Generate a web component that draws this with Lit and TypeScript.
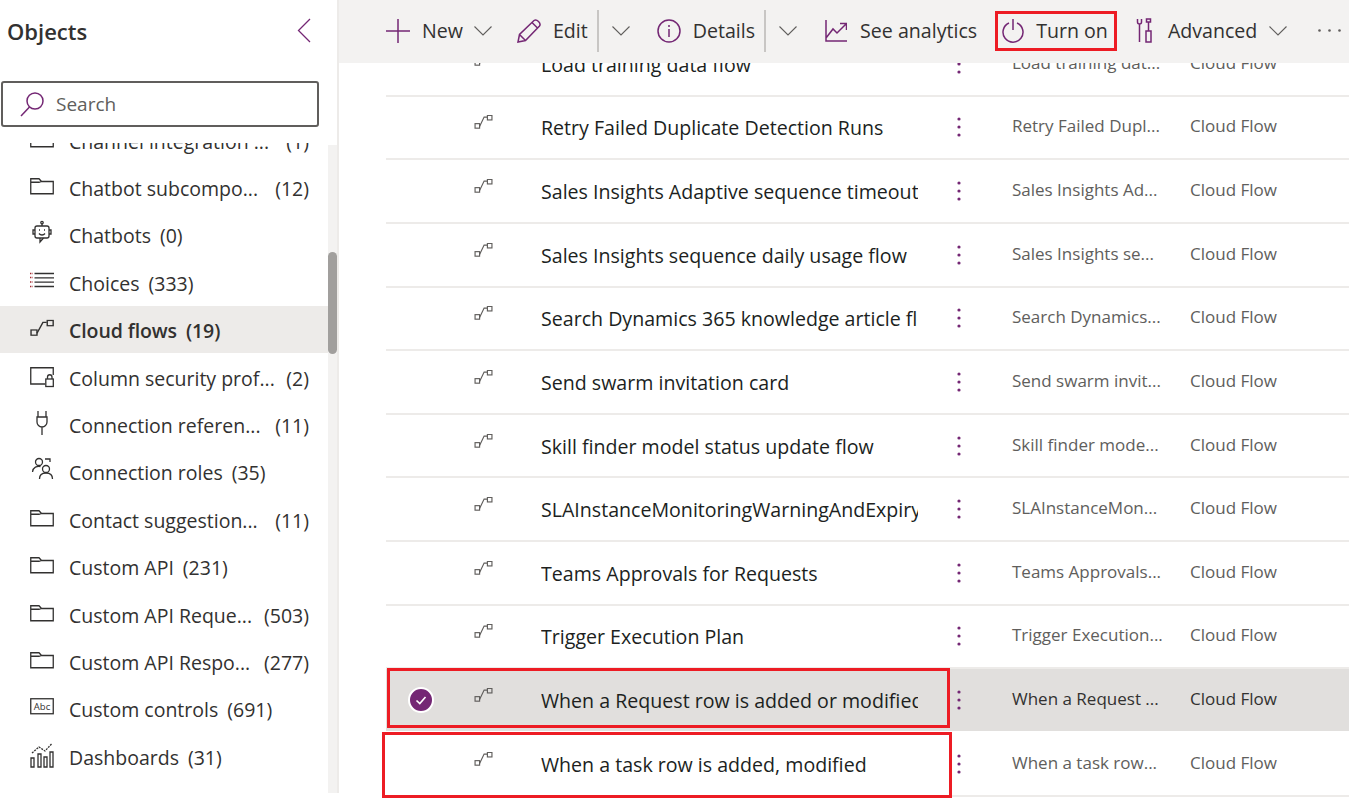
import { LitElement, html, css, svg } from "lit";
import { customElement } from "lit/decorators.js";

const flow = svg`<rect x="0.5" y="10.5" width="5.5" height="5.5"/><rect x="15.5" y="0.5" width="5.5" height="5.5"/><path d="M6 14 L11.5 2.5 L15 2.5"/>`;
const folder = svg`<path transform="translate(0 5)" d="M0.75 0.75 H9 L11.5 3.5 H23.25 V15.75 H0.75 Z M0.75 4.25 H9 L11.5 3.5"/>`;
const icons: Record<string, unknown> = {
  folder,
  bot: svg`<g transform="translate(0 1)"><circle cx="12" cy="1.6" r="1.2"/><path d="M12 3 V5"/><rect x="5" y="5" width="14" height="12" rx="2"/><path d="M5 9 H3 V13 H5 M19 9 H21 V13 H19 M10 17 V21 L13.5 17 M9 12.5 C10.5 14.5 13.5 14.5 15 12.5"/><path d="M9 9 H10 M14 9 H15"/></g>`,
  choices: svg`<g transform="translate(0 4)"><path d="M0 1.5 H2.5 M0 5.5 H2.5 M0 10 H2.5 M0 14.5 H2.5" stroke="#a4262c" stroke-dasharray="1.2 0.6"/><path d="M4.5 1.5 H24 M4.5 5.8 H24 M4.5 10.2 H24 M4.5 14.5 H24"/></g>`,
  flow: svg`<g transform="translate(0.5 5) scale(1.08 0.95)">${flow}</g>`,
  security: svg`<g transform="translate(0 4)"><path d="M15 17 H0.75 V0.75 H23.25 V8"/><rect x="15.8" y="12" width="7.5" height="7.5"/><path d="M17.5 12 V10 A2.2 2.2 0 0 1 22 10 V12"/></g>`,
  plug: svg`<path d="M8 1 V7 M16 1 V7 M7 7 H17 V12 A5 5 0 0 1 7 12 Z M12 17 V25"/>`,
  roles: svg`<g transform="translate(2 1)"><circle cx="7" cy="4" r="3.5"/><path d="M0.5 14 C1 9 5 8 8.5 8.5"/><path d="M13 1 H18 V4"/><circle cx="14" cy="11" r="3.5"/><path d="M7.5 21 C7.5 16.5 10.5 15 14 15 C17.5 15 20.5 16.5 20.5 21"/></g>`,
  abc: svg`<g transform="translate(0 4)"><rect x="0.75" y="0.75" width="22.5" height="15"/><text x="12" y="12" font-size="9.5" text-anchor="middle" stroke="none" fill="#323130" font-family="Open Sans">Abc</text></g>`,
  dash: svg`<path d="M1 16 V25 H4 V16 Z M8 12 V25 H11 V12 Z M14 15 V25 H17 V15 Z M20 10 V25 H23 V10 Z"/><path d="M2 11 L9 5 L15 9 L21.5 2" stroke-dasharray="2 1"/>`,
};

const objects: [string, string, string][] = [
  ["folder", "Channel integration ...", "(1)"],
  ["folder", "Chatbot subcompo...", "(12)"],
  ["bot", "Chatbots", "(0)"],
  ["choices", "Choices", "(333)"],
  ["flow", "Cloud flows", "(19)"],
  ["security", "Column security prof...", "(2)"],
  ["plug", "Connection referen...", "(11)"],
  ["roles", "Connection roles", "(35)"],
  ["folder", "Contact suggestion...", "(11)"],
  ["folder", "Custom API", "(231)"],
  ["folder", "Custom API Reque...", "(503)"],
  ["folder", "Custom API Respo...", "(277)"],
  ["abc", "Custom controls", "(691)"],
  ["dash", "Dashboards", "(31)"],
];

const rows: [string, string][] = [
  ["Load training data flow", "Load training dat..."],
  ["Retry Failed Duplicate Detection Runs", "Retry Failed Dupl..."],
  ["Sales Insights Adaptive sequence timeout flow", "Sales Insights Ad..."],
  ["Sales Insights sequence daily usage flow", "Sales Insights se..."],
  ["Search Dynamics 365 knowledge article flow", "Search Dynamics..."],
  ["Send swarm invitation card", "Send swarm invit..."],
  ["Skill finder model status update flow", "Skill finder mode..."],
  ["SLAInstanceMonitoringWarningAndExpiryFlow", "SLAInstanceMon..."],
  ["Teams Approvals for Requests", "Teams Approvals..."],
  ["Trigger Execution Plan", "Trigger Execution..."],
  ["When a Request row is added or modified", "When a Request ..."],
  ["When a task row is added, modified", "When a task row..."],
];

const chevron = html`<svg class="chev" viewBox="0 0 18 10"><path d="M0.5 0.5 L9 9 L17.5 0.5"/></svg>`;

@customElement("app-root")
export class AppRoot extends LitElement {
  static styles = css`
    :host { display: block; width: 1349px; height: 803px; position: relative; overflow: hidden; background: #fff;
      font-family: "Open Sans", "Noto Sans", sans-serif; color: #323130; }
    .page { display: flex; height: 803px; align-items: flex-start; }
    .side { width: 337px; flex: none; border-right: 2px solid #edebe9; display: flex; flex-direction: column; height: 793px; }
    .head { height: 61px; flex: none; display: flex; align-items: center; justify-content: space-between; padding: 0 26px 0 7px; }
    .head h1 { margin: 0; font-size: 22px; font-weight: 600; }
    .back { width: 14px; height: 25px; fill: none; stroke: #742774; stroke-width: 1.3; }
    .search { height: 42px; margin: 20px 18px 0 1px; border: 2px solid #605e5c; border-radius: 3px; display: flex; align-items: center; gap: 11px; padding-left: 17px; color: #605e5c; font-size: 19px; flex: none; }
    .search svg { width: 25px; height: 26px; fill: none; stroke: #742774; stroke-width: 1.5; }
    .objects { margin-top: 16px; height: 650px; flex: none; display: flex; }
    .olist { width: 328px; height: 650px; overflow: hidden; flex: none; }
    .oinner { margin-top: -27px; }
    .obj { height: 47.4px; box-sizing: border-box; display: flex; align-items: center; padding: 3px 19px 0 30px; font-size: 19.5px; white-space: nowrap; color: #323130; }
    .obj.sel { background: #edebe9; font-weight: 600; letter-spacing: -0.1px; }
    .oicon { width: 24px; height: 26px; flex: none; margin-right: 15px; fill: none; stroke: #323130; stroke-width: 1.3; margin-top: -5px; }
    .oname { flex: none; }
    .ocount { margin-left: 9px; }
    .obj.trunc .ocount { margin-left: auto; }
    .track { width: 9px; height: 648px; margin-top: 2px; background: #f3f2f1; flex: none; }
    .thumb { width: 9px; height: 102px; margin-top: 107px; background: #a19f9d; border-radius: 5px; }

    .main { flex: 1; min-width: 0; display: flex; flex-direction: column; height: 803px; }
    .bar { height: 63px; box-sizing: border-box; flex: none; background: #f3f2f1; display: flex; align-items: center; padding: 0 0 2px 47px; font-size: 19.6px; white-space: nowrap; }
    .btn { display: flex; align-items: center; gap: 12px; flex: none; }
    .btn svg { fill: none; stroke: #742774; stroke-width: 1.5; flex: none; }
    .chev { width: 18px; height: 10px; fill: none; stroke: #605e5c; stroke-width: 1.1; flex: none; display: block; }
    .div { width: 2px; height: 42px; background: #c8c6c4; flex: none; }
    .c1 { margin-left: 11px; }
    .edit { margin-left: 25px; }
    .d1 { margin-left: 9px; }
    .c2, .c3 { margin-left: 13px; }
    .info { margin-left: 27px; }
    .d2 { margin-left: 9px; }
    .analytics { margin-left: 28px; gap: 13px; }
    .power { margin-left: 25px; }
    .tools { margin-left: 28px; gap: 16px; }
    .c4 { margin-left: 12px; }
    .more { margin-left: 31px; flex: none; fill: #605e5c; }

    .list { flex: 1; overflow: hidden; }
    .inner { margin-top: -30px; padding-left: 47px; }
    .row { height: 63.64px; box-sizing: border-box; border-bottom: 2px solid #edebe9; display: flex; align-items: center; white-space: nowrap; }
    .row.sel { background: #e1dfdd padding-box; border-bottom-color: transparent; }
    .cell-check { width: 88px; flex: none; display: flex; padding-left: 22px; box-sizing: border-box; }
    .check { width: 26px; height: 26px; }
    .ficon { width: 19px; height: 14px; flex: none; margin-top: -10px; fill: none; stroke: #605e5c; stroke-width: 1.4; }
    .name { width: 377px; margin-left: 48px; flex: none; overflow: hidden; font-size: 19.6px; color: #201f1e; padding-top: 1px; }
    .dots { width: 4px; height: 20px; margin-left: 39px; flex: none; fill: #742774; }
    .desc { width: 178px; margin-left: 51px; flex: none; font-size: 17px; color: #605e5c; margin-top: -3px; }
    .type { font-size: 17px; color: #605e5c; margin-top: -3px; }
    .row.sel .desc, .row.sel .type { color: #323130; }

    .redbox { position: absolute; border: 3px solid #ed1c24; box-sizing: border-box; pointer-events: none; }
    .r1 { left: 995px; top: 11px; width: 122px; height: 40px; }
    .r2 { left: 387px; top: 668px; width: 563px; height: 60px; }
    .r3 { left: 382px; top: 732px; width: 570px; height: 66px; }
  `;

  render() {
    return html`
      <div class="page">
        <aside class="side">
          <div class="head">
            <h1>Objects</h1>
            <svg class="back" viewBox="0 0 14 25"><path d="M13 1 L1.5 12.5 L13 24"/></svg>
          </div>
          <div class="search">
            <svg viewBox="0 0 25 26"><circle cx="15" cy="10" r="8"/><path d="M9.5 16 L1 25"/></svg>
            <span>Search</span>
          </div>
          <div class="objects">
            <div class="olist"><div class="oinner">
              ${objects.map(([ic, n, c]) => html`
                <div class="obj ${n === "Cloud flows" ? "sel" : ""} ${n.endsWith("...") ? "trunc" : ""}">
                  <svg class="oicon" viewBox="0 0 24 26">${icons[ic]}</svg>
                  <span class="oname">${n}</span><span class="ocount">${c}</span>
                </div>`)}
            </div></div>
            <div class="track"><div class="thumb"></div></div>
          </div>
        </aside>
        <div class="main">
          <div class="bar">
            <div class="btn">
              <svg width="24" height="24" viewBox="0 0 24 24"><path d="M12 0 V24 M0 12 H24"/></svg>
              <span>New</span>
            </div>
            <span class="c1">${chevron}</span>
            <div class="btn edit">
              <svg width="24" height="24" viewBox="0 0 24 24"><path d="M1 23 L2.5 15.5 L17 1.5 Q19 0 21.5 2.5 Q24 5 22.5 7 L8.5 21.5 Z M2.5 15.5 L8.5 21.5 M15 3.5 L20.5 9"/></svg>
              <span>Edit</span>
            </div>
            <span class="div d1"></span>
            <span class="c2">${chevron}</span>
            <div class="btn info">
              <svg width="24" height="24" viewBox="0 0 24 24"><circle cx="12" cy="12" r="11"/><path d="M12 10 V18 M12 6 V8"/></svg>
              <span>Details</span>
            </div>
            <span class="div d2"></span>
            <span class="c3">${chevron}</span>
            <div class="btn analytics">
              <svg width="22" height="22" viewBox="0 0 22 22"><path d="M1 0 V21 H22 M1 18 L8 9 L12 13 L21 4 M15 3.5 H21.5 V10"/></svg>
              <span>See analytics</span>
            </div>
            <div class="btn power">
              <svg width="22" height="24" viewBox="0 0 22 24"><path d="M11 0 V11 M7 4 A10 10 0 1 0 15 4"/></svg>
              <span>Turn on</span>
            </div>
            <div class="btn tools">
              <svg width="16" height="25" viewBox="0 0 16 25"><path d="M1.5 1 V4 A2 2 0 0 0 5.5 4 V1 M3.5 6 V24 M10.5 4 H14.5 V1 H10.5 Z M12.5 4 V13 M10 13 H15 V24 H10 Z"/></svg>
              <span>Advanced</span>
            </div>
            <span class="c4">${chevron}</span>
            <svg class="more" width="23" height="3" viewBox="0 0 23 3"><circle cx="1.5" cy="1.5" r="1.3"/><circle cx="11.5" cy="1.5" r="1.3"/><circle cx="21.5" cy="1.5" r="1.3"/></svg>
          </div>
          <div class="list"><div class="inner">
            ${rows.map(([n, d]) => {
              const sel = n.startsWith("When a Request");
              return html`<div class="row ${sel ? "sel" : ""}">
                <div class="cell-check">${sel ? html`<svg class="check" viewBox="0 0 26 26"><circle cx="13" cy="13" r="12" fill="#742774" stroke="#fff" stroke-width="2"/><path d="M8.5 13.5 L11.8 16.5 L17.5 10" fill="none" stroke="#fff" stroke-width="1.6"/></svg>` : ""}</div>
                <svg class="ficon" viewBox="0 0 21.5 17">${flow}</svg>
                <div class="name">${n}</div>
                <svg class="dots" viewBox="0 0 4 20"><circle cx="2" cy="2" r="1.6"/><circle cx="2" cy="10" r="1.6"/><circle cx="2" cy="18" r="1.6"/></svg>
                <div class="desc">${d}</div>
                <div class="type">Cloud Flow</div>
              </div>`;
            })}
          </div></div>
        </div>
      </div>
      <div class="redbox r1"></div>
      <div class="redbox r2"></div>
      <div class="redbox r3"></div>
    `;
  }
}
